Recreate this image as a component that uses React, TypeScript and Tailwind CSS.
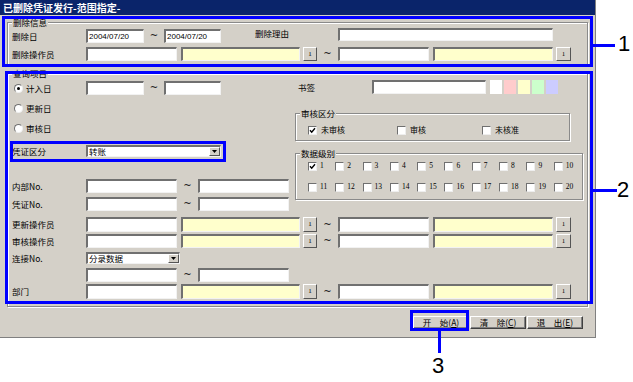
import { twMerge } from "tailwind-merge";
import type { ReactNode } from "react";

const sunken =
   "border-t-2 border-l-2 border-r border-b border-t-[#707070] border-l-[#707070] border-r-[#f2f2f2] border-b-[#f2f2f2]";
const raised =
   "border border-t-white border-l-white border-r-[#555] border-b-[#555] bg-[#d4d0c8]";

function Lbl({ className, children }: { className?: string; children?: ReactNode }) {
   return (
      <div className={twMerge("shrink-0 whitespace-nowrap text-[8.5px] leading-none text-black", className)}>
         {children}
      </div>
   );
}

function Field({ className, yellow, children }: { className?: string; yellow?: boolean; children?: ReactNode }) {
   return (
      <div
         className={twMerge(
            "flex h-full shrink-0 items-center pl-[1px] font-['Liberation_Sans',sans-serif] text-[8px] leading-none",
            sunken,
            yellow ? "bg-[#ffffcc]" : "bg-white",
            className
         )}
      >
         {children}
      </div>
   );
}

function Tilde({ className }: { className?: string }) {
   return (
      <div
         className={twMerge(
            "flex h-full shrink-0 items-center justify-center font-['DejaVu_Sans',sans-serif] text-[10px] leading-none text-[#222]",
            className
         )}
      >
         ~
      </div>
   );
}

function SmallBtn({ className }: { className?: string }) {
   return (
      <div
         className={twMerge(
            "flex h-full shrink-0 items-center justify-center font-['Liberation_Serif',serif] text-[7px] leading-none",
            raised,
            className
         )}
      >
         1
      </div>
   );
}

function Select({ className, value }: { className?: string; value: string }) {
   return (
      <div className={twMerge("flex h-full shrink-0 items-center bg-white pl-[1px]", sunken, className)}>
         <span className="text-[8.5px] leading-none">{value}</span>
         <div className={twMerge("ml-auto flex h-full w-[11px] items-center justify-center", raised)}>
            <svg width="5" height="3" viewBox="0 0 5 3">
               <path d="M0 0 L5 0 L2.5 3 Z" fill="#000" />
            </svg>
         </div>
      </div>
   );
}

function Radio({ checked, label }: { checked?: boolean; label: string }) {
   return (
      <div className="flex w-[72px] shrink-0 items-center gap-[3px]">
         <div className="flex h-[9px] w-[9px] items-center justify-center rounded-full border border-t-[#707070] border-l-[#707070] border-r-[#eee] border-b-[#eee] bg-white">
            {checked && <div className="h-[3px] w-[3px] rounded-full bg-black" />}
         </div>
         <Lbl>{label}</Lbl>
      </div>
   );
}

function Check({ checked, label, className }: { checked?: boolean; label: string; className?: string }) {
   return (
      <div className={twMerge("flex shrink-0 items-center gap-[4px]", className)}>
         <div className="flex h-[9px] w-[9px] shrink-0 items-center justify-center border border-t-[#707070] border-l-[#707070] border-r-[#eee] border-b-[#eee] bg-white">
            {checked && (
               <svg width="7" height="7" viewBox="0 0 7 7">
                  <path d="M1 3.3 L2.7 5.2 L6 1.3" stroke="#000" strokeWidth="1.4" fill="none" />
               </svg>
            )}
         </div>
         <span className="text-[8px] leading-none">{label}</span>
      </div>
   );
}

function Group({ label, className, children }: { label: string; className?: string; children?: ReactNode }) {
   return (
      <div
         className={twMerge(
            "relative shrink-0 border border-[#8a8a8a] shadow-[inset_1px_1px_0_#fff,1px_1px_0_#fff]",
            className
         )}
      >
         <span className="absolute -top-[6px] left-[4px] bg-[#d4d0c8] px-[1px] text-[8.5px] leading-[10px]">{label}</span>
         {children}
      </div>
   );
}

function OperatorRow({ label, className }: { label: string; className?: string }) {
   return (
      <div className={twMerge("flex h-[14px] items-center pl-[4px]", className)}>
         <Lbl className="w-[74px]">{label}</Lbl>
         <Field className="w-[91px]" />
         <div className="w-[4px] shrink-0" />
         <Field yellow className="w-[119px]" />
         <div className="w-[3px] shrink-0" />
         <SmallBtn className="w-[14px]" />
         <Tilde className="w-[21px]" />
         <Field className="w-[91px]" />
         <div className="w-[4px] shrink-0" />
         <Field yellow className="w-[120px]" />
         <div className="w-[3px] shrink-0" />
         <SmallBtn className="w-[15px]" />
      </div>
   );
}

function RangeRow({ label, className }: { label?: string; className?: string }) {
   return (
      <div className={twMerge("flex h-[14px] items-center pl-[4px]", className)}>
         <Lbl className="w-[74px]">{label}</Lbl>
         <Field className="w-[91px]" />
         <Tilde className="w-[21px]" />
         <Field className="w-[91px]" />
      </div>
   );
}

const levels = Array.from({ length: 20 }, (_, i) => i + 1);
const swatches = ["bg-white", "bg-[#ffcccc]", "bg-[#ffffcc]", "bg-[#ccffcc]", "bg-[#ccccff]"];

function Button({ children }: { children: ReactNode }) {
   return (
      <div className="flex h-full w-[56px] items-center justify-center border border-t-white border-l-white border-r-[#404040] border-b-[#404040] bg-[#d4d0c8] text-[8.5px] leading-none shadow-[inset_-1px_-1px_0_#808080]">
         {children}
      </div>
   );
}

export default function App() {
   return (
      <div className="relative h-[382px] w-[633px] overflow-hidden bg-white font-['Noto_Sans_CJK_SC','Liberation_Sans',sans-serif] text-black">
         {/* dialog window */}
         <div className="flex h-[338px] w-[596px] flex-col border-r border-b border-[#808080] bg-[#d4d0c8]">
            <div className="h-[15px] shrink-0 bg-[#0a246a] pl-[3px] text-[10px] font-bold leading-[15px] text-white">
               已删除凭证发行-范围指定-
            </div>

            <div className="flex flex-col px-[7px] pt-[7px]">
               <Group label="删除信息" className="h-[43px] pt-[6px]">
                  <div className="flex h-[14px] items-center pl-[4px]">
                     <Lbl className="w-[74px]">删除日</Lbl>
                     <Field className="w-[58px]">2004/07/20</Field>
                     <Tilde className="w-[20px]" />
                     <Field className="w-[57px]">2004/07/20</Field>
                     <div className="w-[34px] shrink-0" />
                     <Lbl className="-mt-[5px] w-[83px]">删除理由</Lbl>
                     <Field className="-mt-[3px] h-[13px] w-[215px]" />
                  </div>
                  <OperatorRow label="删除操作员" className="mt-[4px]" />
               </Group>

               <Group label="查询项目" className="mt-[8px] h-[234px]">
                  <div className="flex">
                     <div className="flex w-[287px] shrink-0 flex-col">
                        <div className="mt-[7px] flex h-[14px] items-center pl-[6px]">
                           <Radio checked label="计入日" />
                           <Field className="w-[58px]" />
                           <Tilde className="w-[20px]" />
                           <Field className="w-[57px]" />
                        </div>
                        <div className="mt-[6px] flex h-[14px] items-center pl-[6px]">
                           <Radio label="更新日" />
                        </div>
                        <div className="mt-[6px] flex h-[14px] items-center pl-[6px]">
                           <Radio label="审核日" />
                        </div>
                        <div className="mt-[10px] flex h-[12px] items-center pl-[4px]">
                           <Lbl className="w-[74px]">凭证区分</Lbl>
                           <Select className="w-[135px]" value="转账" />
                        </div>
                        <RangeRow label="内部No." className="mt-[22px]" />
                        <RangeRow label="凭证No." className="mt-[4px]" />
                     </div>

                     <div className="flex w-[288px] shrink-0 flex-col">
                        <div className="mt-[6px] flex h-[14px] items-center">
                           <Lbl className="w-[77px] pl-[3px]">书签</Lbl>
                           <Field className="w-[114px]" />
                           <div className="ml-[4px] flex h-full gap-[2px]">
                              {swatches.map(s => (
                                 <div key={s} className={`h-full w-[12px] ${s}`} />
                              ))}
                           </div>
                        </div>

                        <Group label="审核区分" className="mt-[19px] h-[28px] w-[275px] pt-[11px]">
                           <div className="flex h-[10px] items-center pl-[12px]">
                              <Check checked label="未审核" className="w-[89px]" />
                              <Check label="审核" className="w-[85px]" />
                              <Check label="未核准" />
                           </div>
                        </Group>

                        <Group label="数据级别" className="mt-[12px] h-[47px] w-[288px] pt-[7px]">
                           <div className="grid w-[285px] grid-cols-10 gap-y-[11px] pl-[12px]">
                              {levels.map(n => (
                                 <div key={n} className="flex h-[10px] items-center gap-[3px]">
                                    <div className="flex h-[9px] w-[9px] shrink-0 items-center justify-center border border-t-[#707070] border-l-[#707070] border-r-[#eee] border-b-[#eee] bg-white">
                                       {n === 1 && (
                                          <svg width="7" height="7" viewBox="0 0 7 7">
                                             <path d="M1 3.3 L2.7 5.2 L6 1.3" stroke="#000" strokeWidth="1.4" fill="none" />
                                          </svg>
                                       )}
                                    </div>
                                    <span className="font-['Liberation_Serif',serif] text-[7.5px] leading-none">{n}</span>
                                 </div>
                              ))}
                           </div>
                        </Group>
                     </div>
                  </div>

                  <OperatorRow label="更新操作员" className="mt-[6px] h-[15px]" />
                  <OperatorRow label="审核操作员" className="mt-[2px]" />
                  <div className="mt-[4px] flex h-[12px] items-center pl-[4px]">
                     <Lbl className="w-[74px]">连接No.</Lbl>
                     <Select className="w-[94px]" value="分录数据" />
                  </div>
                  <RangeRow className="mt-[4px]" />
                  <OperatorRow label="部门" className="mt-[2px] h-[15px]" />
               </Group>

               <div className="mt-[9px] flex h-[13px] justify-end gap-[1px] pr-[5px]">
                  <Button>
                     开　始(<u>A</u>)
                  </Button>
                  <Button>
                     清　除(<u>C</u>)
                  </Button>
                  <Button>
                     退　出(<u>E</u>)
                  </Button>
               </div>
            </div>
         </div>

         {/* annotation callouts */}
         <div className="absolute top-[16px] left-[2px] h-[51px] w-[591px] border-[3px] border-[#0000ff]" />
         <div className="absolute top-[44px] left-[593px] h-[3px] w-[22px] bg-[#0000ff]" />
         <div className="absolute top-[33px] left-[618px] font-['Liberation_Sans',sans-serif] text-[22px] leading-none">1</div>

         <div className="absolute top-[71px] left-[5px] h-[233px] w-[588px] border-[3px] border-[#0000ff]" />
         <div className="absolute top-[189px] left-[593px] h-[3px] w-[24px] bg-[#0000ff]" />
         <div className="absolute top-[179px] left-[617px] font-['Liberation_Sans',sans-serif] text-[22px] leading-none">2</div>

         <div className="absolute top-[141px] left-[10px] h-[21px] w-[216px] border-[3px] border-[#0000ff]" />

         <div className="absolute top-[310px] left-[410px] h-[21px] w-[59px] border-[3px] border-[#0000ff]" />
         <div className="absolute top-[331px] left-[438px] h-[22px] w-[3px] bg-[#0000ff]" />
         <div className="absolute top-[355px] left-[432px] font-['Liberation_Sans',sans-serif] text-[22px] leading-none">3</div>
      </div>
   );
}
